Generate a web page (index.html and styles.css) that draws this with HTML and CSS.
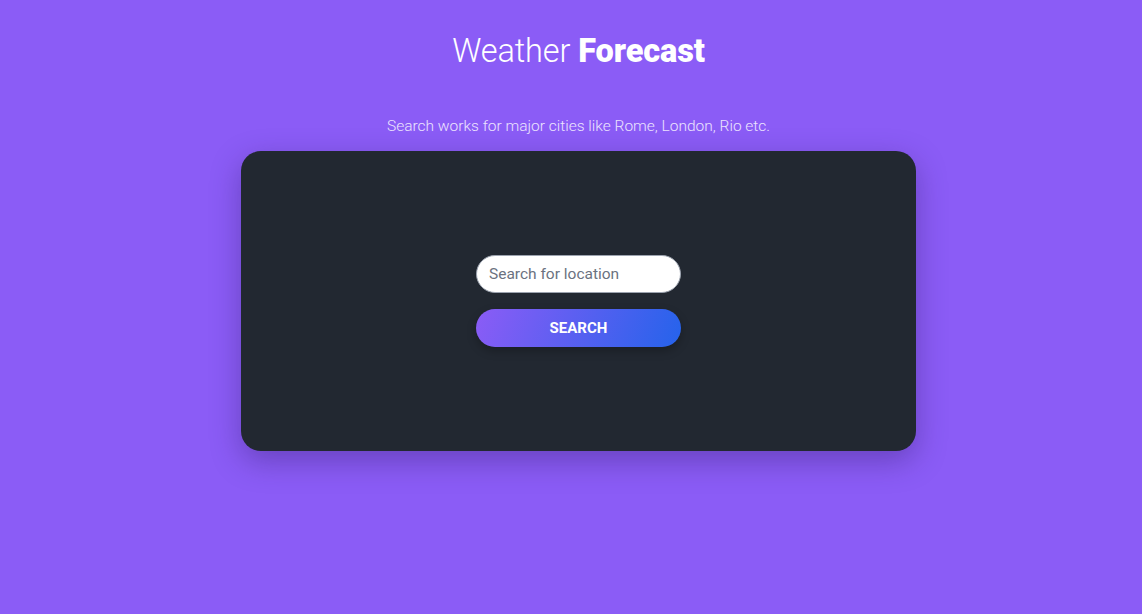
FILE: index.html
```html
<!DOCTYPE html>
<html lang="en">
<head>
<meta charset="utf-8">
<title>Weather Forecast</title>
<link rel="stylesheet" href="styles.css">
</head>
<body>
<main class="page">
  <h1 class="title"><span class="title-light">Weather</span> <span class="title-bold">Forecast</span></h1>
  <p class="hint">Search works for major cities like Rome, London, Rio etc.</p>
  <section class="card">
    <form class="search">
      <input class="search-input" type="text" placeholder="Search for location">
      <button class="search-btn" type="button">SEARCH</button>
    </form>
  </section>
</main>
</body>
</html>
```
FILE: styles.css
```css
* { box-sizing: border-box; }
html, body { margin: 0; padding: 0; }
body {
  background: #8b5cf6;
  font-family: "Roboto", "Inter", sans-serif;
  color: #fff;
  height: 614px;
  overflow: hidden;
}
.page {
  display: flex;
  flex-direction: column;
  align-items: center;
  padding-top: 32px;
  padding-left: 15px;
}
.title {
  margin: 0;
  font-size: 32.5px;
  line-height: 38px;
  font-weight: 300;
  letter-spacing: -0.1px;
}
.title-light { font-weight: 300; }
.title-bold { font-weight: 900; }
.hint {
  margin: 47px 0 0;
  font-size: 15.5px;
  line-height: 18px;
  color: #ebe3fe;
  font-weight: 300;
}
.card {
  margin-top: 16px;
  width: 675px;
  height: 300px;
  background: #222831;
  border-radius: 20px;
  box-shadow: 0 10px 30px rgba(40, 20, 90, 0.35);
  display: flex;
  align-items: center;
  justify-content: center;
}
.search {
  display: flex;
  flex-direction: column;
  gap: 16px;
  width: 205px;
}
.search-input {
  height: 38px;
  border-radius: 19px;
  border: 1px solid #9ca3af;
  background: #fff;
  padding: 0 12px;
  font-family: inherit;
  font-size: 15.5px;
  color: #333;
  outline: none;
}
.search-input::placeholder { color: #6b7280; }
.search-btn {
  height: 38px;
  border: 0;
  border-radius: 19px;
  background: linear-gradient(110deg, #8b5cf6 0%, #2563eb 100%);
  color: #fff;
  font-family: inherit;
  font-weight: 700;
  font-size: 15px;
  box-shadow: 0 4px 10px rgba(0, 0, 0, 0.25);
  cursor: pointer;
}
```
